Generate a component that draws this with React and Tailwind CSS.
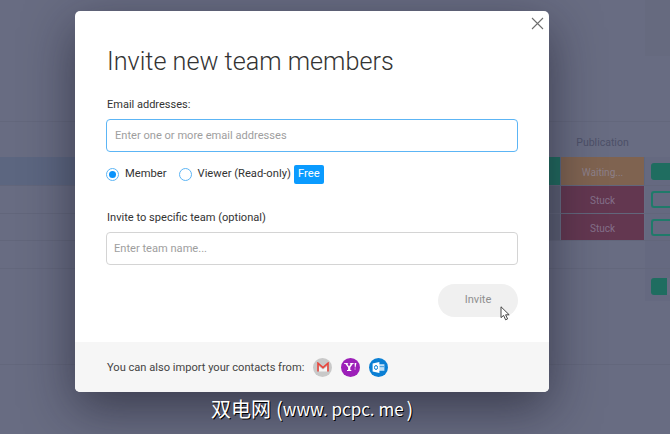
import React from "react";

const Row = ({ band, left, status, statusText, right, h }) => (
  <div className={`flex ${h} border-b border-[#62667b] ${band || ""}`}>
    <div className="w-[549px] shrink-0" />
    <div className={`w-[11px] shrink-0 ${left}`} />
    <div className={`ml-px w-[83px] shrink-0 flex items-center justify-center pt-[2px] text-[10px] ${status}`}>{statusText}</div>
    <div className="ml-px flex-1 flex items-center pl-[6px] bg-[#656980]">{right}</div>
  </div>
);

const Gmail = () => (
  <div className="w-[19px] h-[19px] rounded-full bg-[#c9c9c9] flex items-center justify-center">
    <svg width="12" height="10" viewBox="0 0 12 10" fill="none">
      <path d="M2 9.5h8V4.5L6 7.6 2 4.5z" fill="#f4f4f4" />
      <path d="M1 9.5V1.2L6 5.6 11 1.2V9.5" stroke="#e8453c" strokeWidth="1.6" />
    </svg>
  </div>
);

const Yahoo = () => (
  <div className="w-[19px] h-[19px] rounded-full bg-[#9c1fb8] flex items-center justify-center">
    <svg width="13" height="10" viewBox="0 0 13 10">
      <path d="M0 1h4.2v.8H3.2L5 4.6 6.8 1.8H5.8V1h4v.8H8.9L6.3 5.4V8h1v1H3v-1h1.1V5.4L1.3 1.8H0z" fill="#fff" />
      <path d="M10.6 1h1.8l-.9 4.6h-.7zM10.6 6.4h.9v1.2h-.9z" fill="#fff" />
    </svg>
  </div>
);

const Outlook = () => (
  <div className="w-[19px] h-[19px] rounded-full bg-[#0a7fd4] flex items-center justify-center">
    <svg width="13" height="11" viewBox="0 0 13 11">
      <path d="M7 2.2h5.4v6.6H7z" fill="#bfe0f7" />
      <path d="M7.4 4.4h4.6v.7H7.4z" fill="#0a7fd4" />
      <path d="M0.6 1.4 7.4 0v11L0.6 9.6z" fill="#fff" />
      <ellipse cx="4" cy="5.5" rx="1.5" ry="2" fill="none" stroke="#0a7fd4" strokeWidth="1" />
    </svg>
  </div>
);

export default function App() {
  return (
    <div className="relative w-[670px] h-[434px] overflow-hidden bg-[#686c82]" style={{ fontFamily: "Roboto, sans-serif" }}>
      {/* dimmed board behind the dialog */}
      <div className="flex flex-col">
        <div className="h-[122px] border-b border-[#63677c] flex justify-end">
          <div className="w-[25px] h-[56px] bg-[#666a7f]" />
        </div>
        <div className="h-[35px] flex items-center pt-[6px]">
          <div className="w-[537px] shrink-0" />
          <div className="w-[12px] shrink-0 overflow-hidden text-[10.5px] text-[#4d5068]">g</div>
          <div className="w-[12px] shrink-0" />
          <div className="w-[83px] text-center text-[10.5px] text-[#4d5068]">Publication</div>
        </div>
        <Row
          h="h-[29px]"
          band="bg-[#5c6680]"
          left="bg-[#1f6d60]"
          status="bg-[#7f6350] text-[#8d8089]"
          statusText="Waiting..."
          right={<div className="w-[19px] h-[17px] rounded-l-[3px] bg-[#1f6d60]" />}
        />
        <Row
          h="h-[28px]"
          left="bg-[#5c6075]"
          status="bg-[#633750] text-[#84708a]"
          statusText="Stuck"
          right={<div className="w-[19px] h-[17px] rounded-l-[3px] border-2 border-r-0 border-[#1f7a6a]" />}
        />
        <Row
          h="h-[27px]"
          left="bg-[#5c6075]"
          status="bg-[#633750] text-[#84708a]"
          statusText="Stuck"
          right={<div className="w-[19px] h-[17px] rounded-l-[3px] border-2 border-r-0 border-[#1f7a6a]" />}
        />
        <div className="h-[28px] border-b border-[#63677c] flex justify-end">
          <div className="w-[25px] bg-[#656980]" />
        </div>
        <div className="h-[96px] border-b border-[#63677c] flex justify-end items-start">
          <div className="w-[25px] h-[32px] bg-[#656980] pt-[9px] pl-[6px]">
            <div className="flex w-[19px] h-[17px] rounded-l-[3px] bg-[#1f6d60]">
              <div className="ml-[16px] w-[3px] bg-[#686c82]" />
            </div>
          </div>
        </div>
      </div>

      {/* dialog */}
      <div className="absolute left-[75px] top-[11px] w-[474px] h-[381px] rounded-[5px] bg-white flex flex-col shadow-[0_16px_50px_rgba(20,20,35,0.55)] overflow-hidden">
        <button className="absolute right-[5px] top-[6px] w-[13px] h-[13px] text-[#6e6e6e]" aria-label="Close">
          <svg width="13" height="13" viewBox="0 0 13 13" fill="none" stroke="currentColor" strokeWidth="1.1">
            <path d="M1 1l11 11M12 1L1 12" />
          </svg>
        </button>

        <div className="flex-1 flex flex-col pl-[31px] pr-[31px]">
          <h1 className="ml-px mt-[35px] h-[32px] text-[25.2px] leading-[32px] font-light text-[#333333]">Invite new team members</h1>

          <label className="ml-px mt-[19px] h-[16px] text-[11px] leading-[16px] text-[#333333]">Email addresses:</label>
          <div className="mt-[6px] h-[33px] rounded-[4px] border border-[#5cb5f5] flex items-center pl-[8px] pt-[2px] text-[11.1px] text-[#9e9e9e]">
            Enter one or more email addresses
          </div>

          <div className="mt-[13px] h-[19px] flex items-center text-[11.2px] text-[#333333]">
            <span className="w-[13px] h-[13px] rounded-full border border-[#5cb5f5] flex items-center justify-center">
              <span className="w-[7px] h-[7px] rounded-full bg-[#0a93fb]" />
            </span>
            <span className="ml-[6px]">Member</span>
            <span className="ml-[12px] w-[13px] h-[13px] rounded-full border border-[#5cb5f5]" />
            <span className="ml-[6px]">Viewer (Read-only)</span>
            <span className="ml-[3px] w-[30px] h-[19px] rounded-[2px] bg-[#0a9bff] text-white flex items-center justify-center">Free</span>
          </div>

          <label className="ml-px mt-[26px] h-[16px] text-[11.1px] leading-[16px] text-[#333333]">Invite to specific team (optional)</label>
          <div className="mt-[6px] h-[33px] rounded-[4px] border border-[#d4d4d4] flex items-center pl-[7px] pt-[2px] text-[11.1px] text-[#9e9e9e]">
            Enter team name...
          </div>

          <div className="mt-[19px] flex justify-end">
            <div className="relative w-[80px] h-[33px] rounded-full bg-[#f0f0f0] flex items-center justify-center text-[11.1px] text-[#8f8f8f]">
              Invite
              <svg className="absolute left-[62px] top-[22px]" width="11" height="15" viewBox="0 0 11 15">
                <path d="M1 .8V11.6L3.6 9.4 5.6 13.8 7.6 12.9 5.6 8.8H9.2z" fill="#fff" stroke="#333" strokeWidth="0.9" />
              </svg>
            </div>
          </div>
        </div>

        <div className="h-[50px] shrink-0 bg-[#f6f6f6] flex items-center pl-[32px] pt-[2px] text-[11.1px] text-[#444444]">
          <span>You can also import your contacts from:</span>
          <div className="ml-[9px] mt-[-2px] flex gap-[9px]">
            <Gmail />
            <Yahoo />
            <Outlook />
          </div>
        </div>
      </div>

      {/* watermark */}
      <div
        className="absolute left-[211px] top-[396px] flex items-center h-[26px] text-[20px] leading-[26px] text-white whitespace-nowrap [text-shadow:1px_1px_0_#000]"
        style={{ fontFamily: '"Noto Sans CJK SC", sans-serif' }}
      >
        <span>双电网</span>
        <span className="pl-[5px]">(</span>
        <span className="text-[17px]">www. pcpc. me</span>
        <span className="pl-[3px]">)</span>
      </div>
    </div>
  );
}
